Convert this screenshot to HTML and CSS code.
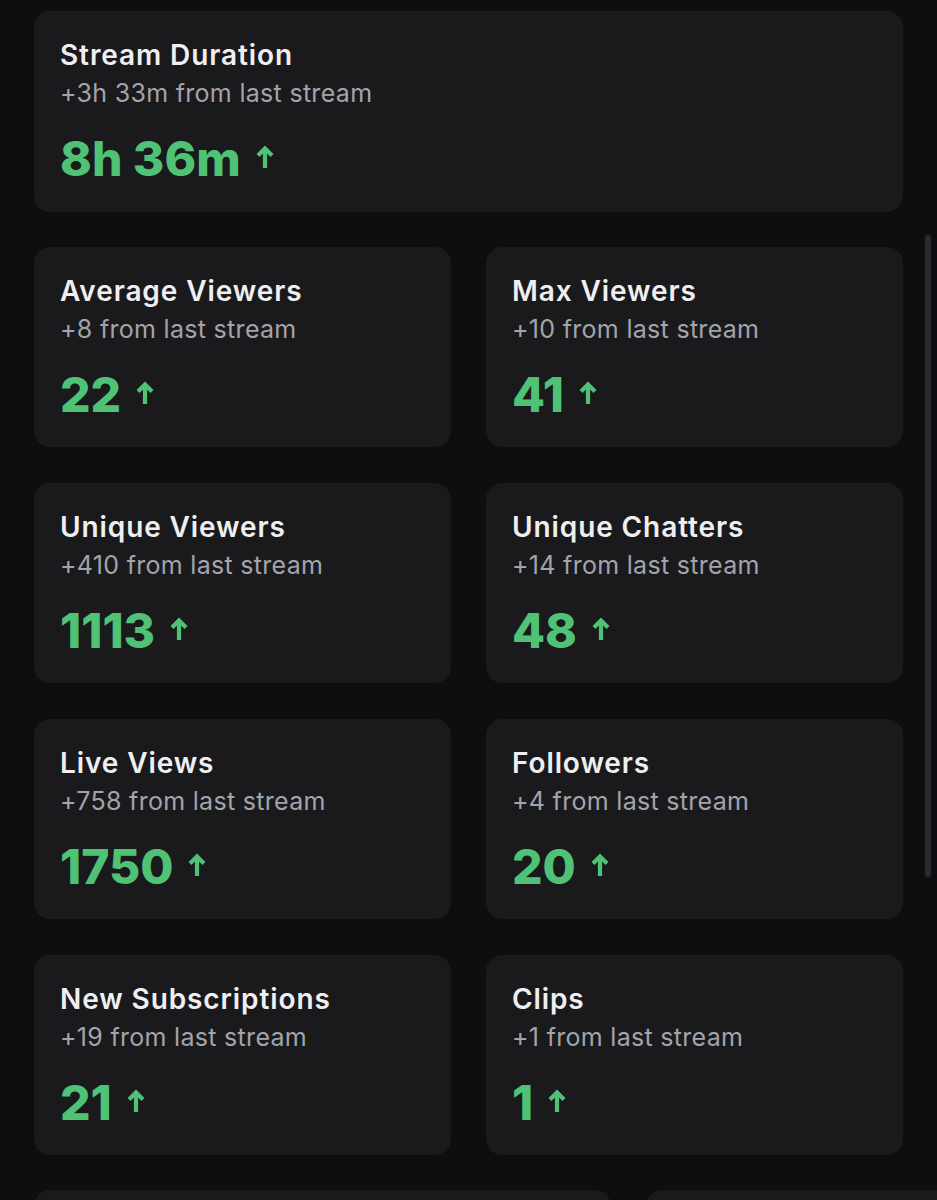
FILE: index.html
```html
<!DOCTYPE html>
<html>
<head>
<meta charset="utf-8">
<link rel="stylesheet" href="styles.css">
</head>
<body>
<div class="page">
  <div class="card wide">
    <div class="title">Stream Duration</div>
    <div class="sub">+3h 33m from last stream</div>
    <div class="value"><span>8h 36m</span><span class="arrow"><svg viewBox="0 0 20 25" width="20" height="25"><path d="M10 24V4.5M3 11.5L10 4.5l7 7" fill="none" stroke="currentColor" stroke-width="4.2" stroke-linejoin="miter"/></svg></span></div>
  </div>
  <div class="grid">
    <div class="card">
      <div class="title">Average Viewers</div>
      <div class="sub">+8 from last stream</div>
      <div class="value"><span>22</span><span class="arrow"><svg viewBox="0 0 20 25" width="20" height="25"><path d="M10 24V4.5M3 11.5L10 4.5l7 7" fill="none" stroke="currentColor" stroke-width="4.2" stroke-linejoin="miter"/></svg></span></div>
    </div>
    <div class="card">
      <div class="title">Max Viewers</div>
      <div class="sub">+10 from last stream</div>
      <div class="value"><span>41</span><span class="arrow"><svg viewBox="0 0 20 25" width="20" height="25"><path d="M10 24V4.5M3 11.5L10 4.5l7 7" fill="none" stroke="currentColor" stroke-width="4.2" stroke-linejoin="miter"/></svg></span></div>
    </div>
    <div class="card">
      <div class="title">Unique Viewers</div>
      <div class="sub">+410 from last stream</div>
      <div class="value"><span>1113</span><span class="arrow"><svg viewBox="0 0 20 25" width="20" height="25"><path d="M10 24V4.5M3 11.5L10 4.5l7 7" fill="none" stroke="currentColor" stroke-width="4.2" stroke-linejoin="miter"/></svg></span></div>
    </div>
    <div class="card">
      <div class="title">Unique Chatters</div>
      <div class="sub">+14 from last stream</div>
      <div class="value"><span>48</span><span class="arrow"><svg viewBox="0 0 20 25" width="20" height="25"><path d="M10 24V4.5M3 11.5L10 4.5l7 7" fill="none" stroke="currentColor" stroke-width="4.2" stroke-linejoin="miter"/></svg></span></div>
    </div>
    <div class="card">
      <div class="title">Live Views</div>
      <div class="sub">+758 from last stream</div>
      <div class="value"><span>1750</span><span class="arrow"><svg viewBox="0 0 20 25" width="20" height="25"><path d="M10 24V4.5M3 11.5L10 4.5l7 7" fill="none" stroke="currentColor" stroke-width="4.2" stroke-linejoin="miter"/></svg></span></div>
    </div>
    <div class="card">
      <div class="title">Followers</div>
      <div class="sub">+4 from last stream</div>
      <div class="value"><span>20</span><span class="arrow"><svg viewBox="0 0 20 25" width="20" height="25"><path d="M10 24V4.5M3 11.5L10 4.5l7 7" fill="none" stroke="currentColor" stroke-width="4.2" stroke-linejoin="miter"/></svg></span></div>
    </div>
    <div class="card">
      <div class="title">New Subscriptions</div>
      <div class="sub">+19 from last stream</div>
      <div class="value"><span>21</span><span class="arrow"><svg viewBox="0 0 20 25" width="20" height="25"><path d="M10 24V4.5M3 11.5L10 4.5l7 7" fill="none" stroke="currentColor" stroke-width="4.2" stroke-linejoin="miter"/></svg></span></div>
    </div>
    <div class="card">
      <div class="title">Clips</div>
      <div class="sub">+1 from last stream</div>
      <div class="value"><span>1</span><span class="arrow"><svg viewBox="0 0 20 25" width="20" height="25"><path d="M10 24V4.5M3 11.5L10 4.5l7 7" fill="none" stroke="currentColor" stroke-width="4.2" stroke-linejoin="miter"/></svg></span></div>
    </div>
  </div>
  <div class="bottom">
    <div class="card stub left"></div>
    <div class="card stub right"></div>
  </div>
</div>
<div class="scrollbar"></div>
</body>
</html>
```
FILE: styles.css
```css
html, body {
  margin: 0;
  padding: 0;
  background: #0e0e10;
  height: 1200px;
  overflow: hidden;
  font-family: Inter, "Noto Sans", sans-serif;
}
.page {
  padding: 11px 34px 0 34px;
  display: flex;
  flex-direction: column;
  gap: 35px;
}
.card {
  background: #1a1a1d;
  border-radius: 16px;
  height: 200px;
  box-sizing: border-box;
  padding: 27px 26px 0 26px;
  display: flex;
  flex-direction: column;
}
.card.wide {
  height: 201px;
}
.title {
  color: #efeff1;
  font-size: 28px;
  font-weight: 600;
  line-height: 34px;
  letter-spacing: 0.9px;
}
.sub {
  color: #a3a3ac;
  font-size: 25px;
  font-weight: 400;
  line-height: 30px;
  margin-top: 6px;
  letter-spacing: 0.3px;
}
.value {
  color: #4fc276;
  font-size: 48px;
  font-weight: 800;
  line-height: 56px;
  margin-top: 23px;
  display: flex;
  align-items: center;
}
.arrow {
  display: inline-flex;
  margin-left: 14px;
  margin-top: -6px;
}
.grid {
  display: grid;
  grid-template-columns: 1fr 1fr;
  column-gap: 35px;
  row-gap: 36px;
}
.bottom {
  display: flex;
  gap: 35px;
}
.stub.left {
  width: 577px;
  flex: none;
}
.stub.right {
  flex: 1;
  margin-right: -60px;
}
.scrollbar {
  position: absolute;
  left: 925px;
  top: 235px;
  width: 6px;
  height: 642px;
  border-radius: 3px;
  background: #2b2b2f;
}
```
